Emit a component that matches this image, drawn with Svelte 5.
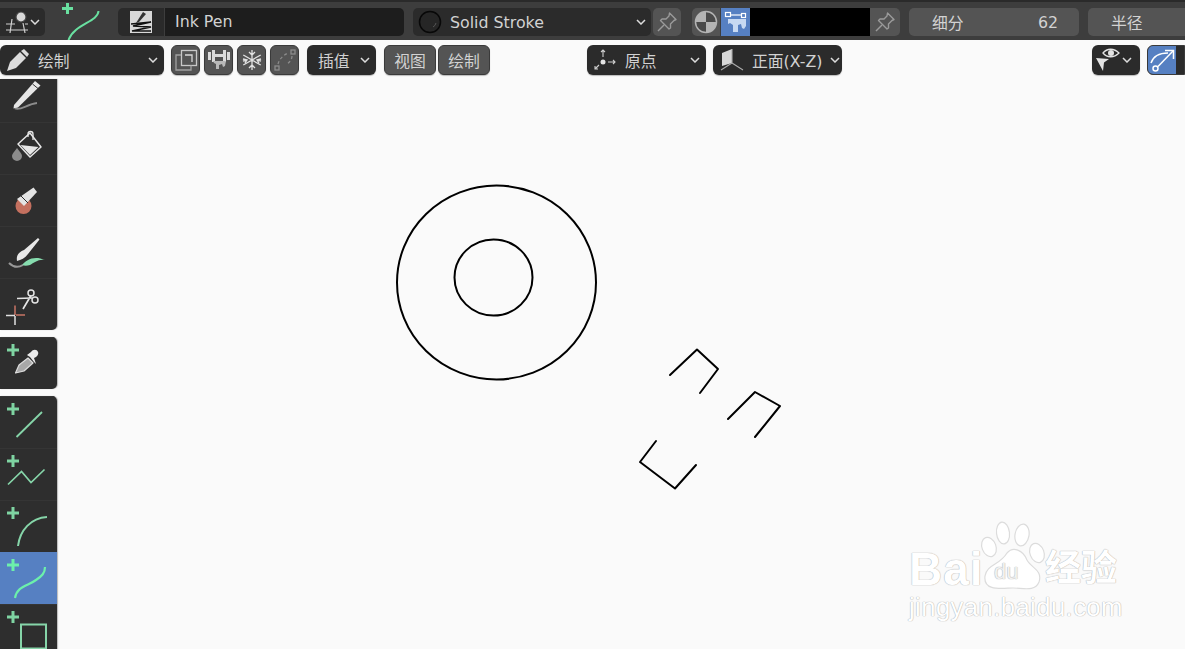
<script>
  // Chevron shared by all the dropdowns
  const caret = "M0 0 L4 4 L8 0";
</script>

{#snippet chevron()}
  <svg class="caret" width="10" height="6" viewBox="-1 -1 10 6"><path d={caret} /></svg>
{/snippet}

{#snippet pin()}
  <svg width="24" height="24" viewBox="0 0 24 24" fill="none" stroke="#9a9a9a" stroke-width="1.4" stroke-linejoin="round">
    <path d="M14.5 3 L21 9.5 L19 10.5 L15.5 14 L15.5 18 L14 19 L5.5 10.5 L7 9 L11 9 L14 6 Z" />
    <path d="M9 15 L3 21" />
  </svg>
{/snippet}

{#snippet plus(color = "#7fd4a2")}
  <svg class="plus" width="12" height="12" viewBox="0 0 12 12" fill={color}><path d="M4.5 0h3v4.5H12v3H7.5V12h-3V7.5H0v-3h4.5z" /></svg>
{/snippet}

<div class="app">
  <header class="topbar">
    <div class="field dark icon-drop">
      <svg width="24" height="24" viewBox="0 0 24 24" fill="none" stroke="#cfcfcf" stroke-width="1.2">
        <circle cx="16" cy="7" r="5" fill="#d8d8d8" stroke="#444" />
        <path d="M1 14h9M20 14h3M1 20h22M7 9L5 23M18 13l2 10" />
      </svg>
      {@render chevron()}
    </div>
    <div class="curve-tool">
      <svg width="46" height="38" viewBox="0 0 46 38" fill="none">
        <path d="M6 1h3v4h4v3H9v4H6V8H2V5h4z" fill="#69e0a0" />
        <path d="M38.500 9 C38 20 14 22 8.500 38" stroke="#69e0a0" stroke-width="2" />
      </svg>
    </div>
    <div class="brush-name">
      <div class="thumb">
        <svg width="22" height="22" viewBox="0 0 22 22">
          <rect width="22" height="22" fill="#d8d8d8" />
          <path d="M13 1 L16 3 L9 11 L6 12 Z" fill="#333" />
          <path d="M1 13 L21 11 L3 15 L21 16 L2 20 L21 20" fill="none" stroke="#111" stroke-width="1.6" />
        </svg>
      </div>
      <div class="name">Ink Pen</div>
    </div>
    <div class="field stroke">
      <svg width="24" height="24" viewBox="0 0 24 24">
        <circle cx="12" cy="12" r="10.500" fill="#262626" stroke="#080808" stroke-width="1.500" />
        <path d="M15 17 a6 6 0 0 0 3 -4" stroke="#555" fill="none" />
      </svg>
      <span class="grow">Solid Stroke</span>
      {@render chevron()}
    </div>
    <div class="pin-btn pin-a">{@render pin()}</div>
    <div class="colors">
      <div class="mode">
        <svg width="24" height="24" viewBox="0 0 24 24">
          <circle cx="12" cy="12" r="10.500" fill="#4a4a4a" stroke="#b4b4b4" stroke-width="1.500" />
          <path d="M12 1.500 A10.500 10.500 0 0 0 1.500 12 L12 12 L12 22.500 A10.500 10.500 0 0 0 22.500 12 L12 12 Z" fill="#b4b4b4" />
        </svg>
      </div>
      <div class="mode active">
        <svg width="24" height="24" viewBox="0 0 24 24">
          <path d="M4 5h16" stroke="#fff" stroke-width="1.200" />
          <rect x="1.500" y="2.500" width="5" height="4" fill="#5680c2" stroke="#fff" stroke-width="1.200" />
          <rect x="17.500" y="3.500" width="4" height="4" fill="#5680c2" stroke="#fff" stroke-width="1.200" />
          <path d="M4 9h18v7l-2 3-2-1-1-4-3 1v7H9v-7l-3-2-2 1z" fill="#c7d9f2" />
        </svg>
      </div>
      <div class="swatch"></div>
      <div class="pin-btn pin-b">{@render pin()}</div>
    </div>
    <div class="slider"><span class="cjk">细分</span><span>62</span></div>
    <div class="slider radius"><span class="cjk">半径</span></div>
  </header>

  <div class="toolheader">
    <div class="field mode-drop">
      <svg width="24" height="24" viewBox="0 0 24 24" fill="#dcdcdc">
        <path d="M2 23 L5 14 L15 4 L21 10 L11 20 Z" />
        <path d="M16 3 L19 1 L24 6 L22 9 Z" />
      </svg>
      <span class="cjk grow">绘制</span>
      {@render chevron()}
    </div>
    <div class="icons">
      <button aria-label="多帧">
        <svg width="24" height="24" viewBox="0 0 24 24" fill="none" stroke="#c8c8c8" stroke-width="1.300">
          <rect x="7.500" y="2.500" width="15" height="15" />
          <path d="M7 7H2v15h15v-4.500" stroke="#a0a0a0" />
          <path d="M11 7h7v7" stroke="#d8d8d8" />
        </svg>
      </button>
      <button aria-label="折叠">
        <svg width="24" height="22" viewBox="0 0 24 22" fill="#dcdcdc">
          <rect x="1" y="3" width="3" height="8" /><rect x="5" y="1" width="3" height="12" />
          <rect x="16" y="1" width="3" height="12" /><rect x="20" y="3" width="3" height="8" />
          <rect x="8" y="5" width="8" height="3" />
          <path d="M6 12h13l-1 5-2 1-1-3-3 1v4H9v-5l-2-1z" fill="#b8b8b8" />
        </svg>
      </button>
      <button aria-label="冻结">
        <svg width="22" height="22" viewBox="0 0 22 22" fill="none" stroke="#e2e2e2" stroke-width="1.300">
          <path d="M11 1v20M2.300 6l17.400 10M2.300 16L19.700 6M8 3l3 3 3-3M8 19l3-3 3 3M2 10l4 1-2 3M20 10l-4 1 2 3M2 12l4-1M20 12l-4-1" />
        </svg>
      </button>
      <button aria-label="选择" class="dim">
        <svg width="24" height="24" viewBox="0 0 24 24" fill="none" stroke="#8c8c8c" stroke-width="1.300">
          <rect x="18" y="2" width="4" height="4" /><rect x="2" y="18" width="4" height="4" />
          <path d="M19 8 C19 11 17 14 14 16 M5 16 C6 12 9 8 15 5" stroke-dasharray="3 2.500" />
        </svg>
      </button>
    </div>
    <div class="field interp cjk">插值 {@render chevron()}</div>
    <div class="menus cjk"><button>视图</button><button>绘制</button></div>
    <div class="field origin">
      <svg width="24" height="24" viewBox="0 0 24 24" fill="none" stroke="#cfcfcf" stroke-width="1.100">
        <circle cx="11" cy="14" r="2.500" fill="#e4e4e4" stroke="none" />
        <path d="M11 9V2M9 4l2-2 2 2M16 14h7M21 12l2 2-2 2M7 17l-4 4M3 18v3h3" />
      </svg>
      <span class="cjk grow">原点</span>
      {@render chevron()}
    </div>
    <div class="field view">
      <svg width="26" height="24" viewBox="0 0 26 24">
        <path d="M4 5 L14 1 V15 L4 18 Z" fill="#d8d8d8" />
        <path d="M14 1V15M14 15L25 22M14 15L3 22" stroke="#aaa" fill="none" stroke-width="1.100" />
      </svg>
      <span class="cjk grow">正面(X-Z)</span>
      {@render chevron()}
    </div>
    <div class="field overlay">
      <svg width="26" height="24" viewBox="0 0 26 24">
        <path d="M9 5 C13 0 20 0 25 5 C20 10 13 10 9 5Z" fill="none" stroke="#e4e4e4" stroke-width="1.300" />
        <circle cx="17" cy="5" r="3" fill="#e4e4e4" />
        <path d="M2 10 L15 11 L10 14.500 L9 23 Z" fill="#e4e4e4" />
      </svg>
      {@render chevron()}
    </div>
    <div class="snap">
      <div class="snap-on">
        <svg width="28" height="28" viewBox="0 0 28 28" fill="none" stroke="#fff" stroke-width="1.500">
          <circle cx="7.500" cy="22.500" r="2.500" />
          <path d="M3 17 C5 11 11 7 20 7" />
          <path d="M10 20.500 L25 5" />
          <path d="M17 4.500h8.500v8.500" />
        </svg>
      </div>
    </div>
  </div>

  <div class="viewport">
    <nav class="tools">
      <div class="group">
        <div class="tool first">
          <svg width="57" height="43" viewBox="0 0 57 43">
            <path d="M14 26 L35 2 L40.500 6.500 L18 28.500 L13.500 29.500 Z" fill="#e6e6e6" />
            <path d="M32.500 5 L38 9.500" stroke="#333" />
            <path d="M15 29.500 C21 32 27 25 37 24" stroke="#8c8c8c" stroke-width="1.800" fill="none" />
          </svg>
        </div>
        <div class="tool">
          <svg width="57" height="51" viewBox="0 0 57 51">
            <path d="M17 25 C14 29 12 31 12 33 a5 5 0 0 0 10 0 C22 31 20 29 17 25Z" fill="#8c8c8c" />
            <path d="M18 21 L30 10 L41 24 L30 34 Z" fill="#2e2e2e" stroke="#e6e6e6" stroke-width="1.500" stroke-linejoin="round" />
            <path d="M20.500 22 L38.500 24 L30 32 Z" fill="#e6e6e6" />
            <path d="M28 14 V11 a2.500 2.500 0 0 1 5 0 V17" fill="none" stroke="#e6e6e6" stroke-width="1.300" />
          </svg>
        </div>
        <div class="tool">
          <svg width="57" height="51" viewBox="0 0 57 51">
            <circle cx="23.500" cy="31" r="8" fill="#c4705f" />
            <path d="M17 24 L33.500 12.500 L37 17 L24 31 Z" fill="#e4e4e4" />
            <path d="M20.500 20.500 L28 28" stroke="#2e2e2e" stroke-width="1" />
          </svg>
        </div>
        <div class="tool">
          <svg width="57" height="51" viewBox="0 0 57 51">
            <path d="M22 38 C26 33 34 28 45 33 C38 32 34 36 30 38 C27 39 24 39 22 38 Z" fill="#86dcae" />
            <path d="M9 36 C13 40 18 41 23 38" stroke="#999" stroke-width="2" fill="none" />
            <path d="M17 34 C16 28 19 25 24 23 L38 11 L39.500 12.500 L28 27 C25 31 21 33 17 34Z" fill="#e8e8e8" />
          </svg>
        </div>
        <div class="tool">
          <svg width="57" height="51" viewBox="0 0 57 51" fill="none">
            <path d="M15 26.500 V36 M16 36 H25" stroke="#c87566" stroke-width="1.500" />
            <path d="M6 36.500 H15 M15 37 V46" stroke="#e0e0e0" stroke-width="1.500" />
            <circle cx="31" cy="14" r="3" stroke="#e4e4e4" stroke-width="1.500" />
            <circle cx="35" cy="21" r="3" stroke="#e4e4e4" stroke-width="1.500" />
            <path d="M17 19.500 L32 19 M23 30 L31 16.500" stroke="#e4e4e4" stroke-width="1.700" />
          </svg>
        </div>
      </div>
      <div class="group">
        <div class="tool">
          {@render plus()}
          <svg width="57" height="51" viewBox="0 0 57 51">
            <path d="M15.500 35 L19 27 L28 20 L33 25 L24 33 Z" fill="#a8a8a8" stroke="#dcdcdc" stroke-width="1.200" stroke-linejoin="round" />
            <path d="M27 17 L30 19 L34 24 L36 26 L34 20 C37 19 39 16 38 14 C37 11 33 11 31 14 Z" fill="#ececec" />
          </svg>
        </div>
      </div>
      <div class="group clip">
        <div class="tool">
          {@render plus()}
          <svg width="57" height="51" viewBox="0 0 57 51"><path d="M16.500 40 L42 15" stroke="#86d5a9" stroke-width="1.800" /></svg>
        </div>
        <div class="tool">
          {@render plus()}
          <svg width="57" height="51" viewBox="0 0 57 51" fill="none"><path d="M8 35.500 L21.500 22.500 L31 33.500 L44.500 20.500" stroke="#86d5a9" stroke-width="1.700" /></svg>
        </div>
        <div class="tool">
          {@render plus()}
          <svg width="57" height="51" viewBox="0 0 57 51" fill="none"><path d="M18 45 C20 29 31 17 47 16" stroke="#86d5a9" stroke-width="2" /></svg>
        </div>
        <div class="tool on">
          {@render plus("#6cf0ab")}
          <svg width="57" height="51" viewBox="0 0 57 51" fill="none"><path d="M15 45 C17 33 28 33 36 27 C42 23 45 20 45 14" stroke="#6cf0ab" stroke-width="2.200" /></svg>
        </div>
        <div class="tool">
          {@render plus()}
          <svg width="57" height="51" viewBox="0 0 57 51" fill="none"><rect x="21" y="19.500" width="25" height="24" stroke="#86d5a9" stroke-width="2" /></svg>
        </div>
      </div>
    </nav>

    <svg class="strokes" width="1185" height="649" viewBox="0 0 1185 649" fill="none" stroke="#000" stroke-width="2" stroke-linejoin="round" stroke-linecap="round">
      <ellipse cx="496.500" cy="282.500" rx="99.500" ry="97" />
      <ellipse cx="493.500" cy="277.500" rx="39" ry="38" />
      <path d="M670 375 L697 349.500 L718 369 L700 393" />
      <path d="M728 419 L755 392 L780 406 L755 437" />
      <path d="M656 441 L640 462 L675 488.500 L696 465" />
    </svg>

    <div class="watermark">
      <div class="logo">
        <span class="bai">Bai</span>
        <span class="paw">
          <svg width="72" height="76" viewBox="0 0 72 76">
            <g fill="#fff" stroke="#dcdcdc" stroke-width="1.200">
              <ellipse cx="12" cy="27" rx="7" ry="10" transform="rotate(-20 12 27)" />
              <ellipse cx="26" cy="13" rx="6.500" ry="11" transform="rotate(-6 26 13)" />
              <ellipse cx="45" cy="15" rx="7" ry="11" transform="rotate(10 45 15)" />
              <ellipse cx="60" cy="33" rx="7" ry="10" transform="rotate(-20 60 33)" />
              <path d="M8 56 C10 44 22 46 30 33 C36 26 46 30 50 40 C54 48 66 50 62 62 C58 72 46 68 36 68 C26 68 6 72 8 56Z" />
            </g>
          </svg>
          <span class="du">du</span>
        </span>
        <span class="jy">经验</span>
      </div>
      <div class="url">jingyan.baidu.com</div>
    </div>
  </div>
</div>

<style>
  :global(body) {
    margin: 0;
    overflow: hidden;
  }

  .app {
    width: 1185px;
    height: 649px;
    background: #fafafa;
    font-family: "DejaVu Sans", "Noto Sans CJK SC", sans-serif;
    font-size: 15.8px;
    color: #d2d2d2;
    overflow: hidden;
    display: flex;
    flex-direction: column;
  }

  .cjk {
    font-family: "DejaVu Sans", "Noto Sans CJK SC", sans-serif;
  }

  .topbar {
    height: 40px;
    box-sizing: border-box;
    padding-top: 2px;
    flex: none;
    display: flex;
    align-items: center;
    background: #3d3d3d;
    border-top: 2px solid #2a2a2a;
    white-space: nowrap;
  }

  .field {
    height: 28px;
    flex: none;
    display: flex;
    align-items: center;
    box-sizing: border-box;
    background: #2b2b2b;
    border-radius: 5px;
  }

  .field svg {
    flex: none;
  }

  .caret {
    flex: none;
    fill: none;
    stroke: #dcdcdc;
    stroke-width: 1.500;
  }

  .grow {
    flex: 1;
  }

  .icon-drop {
    width: 45px;
    padding-left: 5px;
    gap: 1px;
    border-radius: 0 5px 5px 0;
  }

  .curve-tool {
    width: 73px;
    height: 38px;
    flex: none;
    margin-top: -2px;
    padding-left: 15px;
    box-sizing: border-box;
  }

  .curve-tool svg {
    display: block;
  }

  .brush-name {
    width: 286px;
    height: 28px;
    flex: none;
    display: flex;
    border-radius: 5px;
    overflow: hidden;
  }

  .thumb {
    width: 46px;
    display: flex;
    align-items: center;
    justify-content: center;
    background: #2a2a2a;
    border-right: 1px solid #3d3d3d;
  }

  .name {
    flex: 1;
    padding-left: 10px;
    line-height: 28px;
    background: #1d1d1d;
  }

  .stroke {
    width: 238px;
    margin-left: 9px;
    padding: 0 5px;
    gap: 8px;
  }

  .pin-btn {
    width: 28px;
    height: 28px;
    flex: none;
    display: flex;
    align-items: center;
    justify-content: center;
    background: #545454;
    border-radius: 5px;
  }

  .pin-a {
    margin-left: 2px;
  }

  .colors {
    width: 208px;
    height: 28px;
    flex: none;
    margin-left: 11px;
    display: flex;
  }

  .mode {
    width: 28px;
    height: 28px;
    flex: none;
    display: flex;
    align-items: center;
    justify-content: center;
    background: #545454;
    border-radius: 5px 0 0 5px;
    margin-right: 1px;
  }

  .mode.active {
    width: 29px;
    margin: 0;
    background: #5680c2;
    border-radius: 0;
  }

  .swatch {
    width: 120px;
    background: #000;
  }

  .pin-b {
    border-radius: 0 5px 5px 0;
    width: 30px;
  }

  .slider {
    width: 170px;
    height: 28px;
    flex: none;
    margin-left: 9px;
    padding: 0 21px 0 23px;
    box-sizing: border-box;
    display: flex;
    justify-content: space-between;
    align-items: center;
    background: #545454;
    border-radius: 5px;
  }

  .radius {
    width: 110px;
    justify-content: flex-start;
  }

  .toolheader {
    height: 30px;
    flex: none;
    margin-top: 5px;
    display: flex;
    white-space: nowrap;
  }

  .toolheader .field {
    height: 30px;
    box-shadow: 0 1px 1px #bbb;
    border-radius: 6px;
  }

  .mode-drop {
    width: 164px;
    padding: 0 6px 0 5px;
    gap: 9px;
    border-radius: 0 6px 6px 0;
  }

  .icons {
    display: flex;
    gap: 4px;
    margin-left: 7px;
  }

  button {
    width: 29px;
    height: 30px;
    padding: 0;
    border: 1px solid #3a3a3a;
    border-radius: 6px;
    background: #545454;
    color: #d2d2d2;
    font: inherit;
    display: flex;
    align-items: center;
    justify-content: center;
    box-shadow: 0 1px 1px #bbb;
  }

  .interp {
    width: 69px;
    margin-left: 8px;
    padding: 0 6px 0 11px;
    justify-content: space-between;
  }

  .menus {
    display: flex;
    gap: 2px;
    margin-left: 8px;
  }

  .menus button {
    width: 52px;
  }

  .origin {
    width: 119px;
    margin-left: 97px;
    padding: 0 6px 0 5px;
    gap: 9px;
  }

  .view {
    width: 129px;
    margin-left: 7px;
    padding: 0 2px 0 5px;
    gap: 8px;
  }

  .overlay {
    width: 48px;
    margin-left: 250px;
    padding-left: 2px;
    gap: 2px;
  }

  .snap {
    width: 38px;
    height: 30px;
    flex: none;
    margin-left: 7px;
    background: #2b2b2b;
    border-radius: 6px 0 0 6px;
    box-sizing: border-box;
    border: 1px solid #3a3a3a;
  }

  .snap-on {
    width: 28px;
    height: 28px;
    display: flex;
    align-items: center;
    justify-content: center;
    background: #5680c2;
    border-radius: 5px 0 0 5px;
  }

  .viewport {
    flex: 1;
    position: relative;
    margin-top: 4px;
  }

  .tools {
    width: 57px;
    display: flex;
    flex-direction: column;
    gap: 7px;
    position: relative;
    z-index: 1;
  }

  .group {
    display: flex;
    flex-direction: column;
    background: #2e2e2e;
    border-radius: 0 0 5px 0;
    overflow: hidden;
    box-shadow: 1px 0 1px #bbb;
  }

  .group:nth-child(2) {
    border-radius: 0 5px 5px 0;
  }

  .clip {
    border-radius: 0 5px 0 0;
  }

  .tool {
    height: 52px;
    position: relative;
    box-sizing: border-box;
    border-top: 1px solid #353535;
  }

  .tool svg {
    display: block;
  }

  .tool.first {
    height: 43px;
    border-top: 0;
  }

  .tool.on {
    background: #5680c2;
    border-top-color: #5680c2;
  }

  .tool .plus {
    position: absolute;
    left: 7px;
    top: 6px;
  }

  .strokes {
    position: absolute;
    left: 0;
    top: -79px;
    pointer-events: none;
  }

  .watermark {
    position: absolute;
    left: 909px;
    top: 443px;
    color: #fff;
    font-family: "Liberation Sans", "Noto Sans CJK SC", sans-serif;
    text-shadow: 0 0 1px #b0b0b0, 0 0 1px #b0b0b0;
  }

  .logo {
    display: flex;
    align-items: flex-end;
    height: 70px;
  }

  .bai {
    font-size: 46px;
    font-weight: 700;
    line-height: 46px;
    width: 72px;
    letter-spacing: 1px;
  }

  .paw {
    position: relative;
    width: 62px;
    height: 70px;
  }

  .paw svg {
    position: absolute;
    left: -4px;
    top: -2px;
  }

  .du {
    position: absolute;
    left: 13px;
    top: 38px;
    font-size: 22px;
    line-height: 24px;
    color: #f2f2f2;
  }

  .jy {
    font-size: 36px;
    font-weight: 700;
    line-height: 46px;
    margin-left: 2px;
  }

  .url {
    font-size: 25.700px;
    line-height: 28px;
    letter-spacing: .4px;
    margin-top: 1px;
  }
</style>
